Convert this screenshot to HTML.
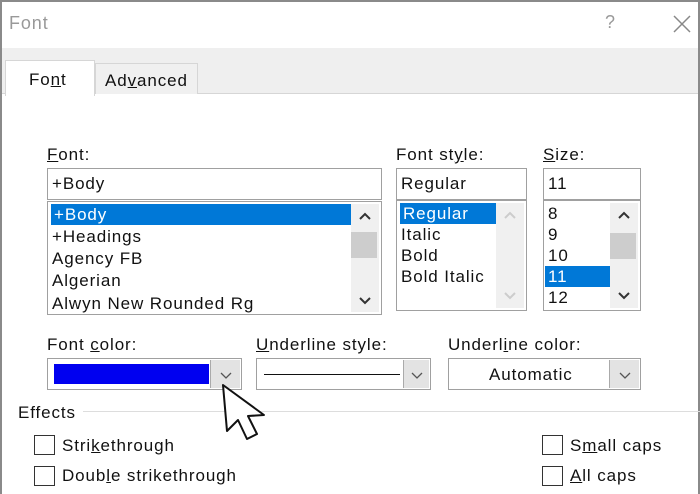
<!DOCTYPE html>
<html><head><style>
*{box-sizing:border-box;margin:0;padding:0}
body{width:700px;height:494px;background:#fff;font-family:"Liberation Sans",sans-serif;font-size:17px;letter-spacing:0.9px;color:#111;position:relative;overflow:hidden}
.a{position:absolute;white-space:nowrap}
.frame{left:0;top:0;width:700px;height:494px;border:2px solid #8a8a8a;border-bottom:none}
.box{position:absolute;border:1px solid #a0a0a0;background:#fff}
.row{position:absolute;left:4px;height:21px;line-height:21px;white-space:nowrap}
.sel{background:#0078d7;color:#fff}
.sb{position:absolute;top:2px;bottom:2px;right:2px;width:28px;background:#f0f0f0}
.cb{position:absolute;width:21px;height:20px;border:1px solid #333;background:#fff}
u{text-decoration:underline}
.dd{position:absolute;top:1px;right:1px;bottom:1px;width:30px;background:#e3e3e3;border-left:1px solid #aaa}
svg.ch{position:absolute}
</style></head><body>
<div class="a frame"></div>
<div class="a" style="left:9px;top:13px;font-size:18px;color:#999">Font</div>
<div class="a" style="left:605px;top:12px;font-size:18px;color:#999">?</div>
<svg class="a" style="left:672px;top:14px" width="20" height="20"><path d="M2 2L18 18M18 2L2 18" stroke="#888" stroke-width="1.5"/></svg>
<div class="a" style="left:2px;top:48px;width:696px;height:46px;background:#efefef;border-bottom:1px solid #d6d6d6"></div>
<div class="a" style="left:5px;top:60px;width:90px;height:36px;background:#fff;border:1px solid #d6d6d6;border-bottom:none"></div>
<div class="a" style="left:29px;top:70px">Fo<u>n</u>t</div>
<div class="a" style="left:95px;top:63px;width:103px;height:31px;background:#f0f0f0;border:1px solid #d6d6d6;border-bottom:none"></div>
<div class="a" style="left:105px;top:71px">Ad<u>v</u>anced</div>

<div class="a" style="left:47px;top:145px"><u>F</u>ont:</div>
<div class="box" style="left:47px;top:168px;width:335px;height:32px"><span class="row" style="top:4px">+Body</span></div>
<div class="box" style="left:47px;top:201px;width:335px;height:114px">
<div class="row sel" style="top:2px;width:300px;left:3px;padding-left:3px">+Body</div>
<div class="row" style="top:24px">+Headings</div>
<div class="row" style="top:46px">Agency FB</div>
<div class="row" style="top:68px">Algerian</div>
<div class="row" style="top:91px">Alwyn New Rounded Rg</div>
<div class="sb"><div class="a" style="left:0;top:28px;width:26px;height:26px;background:#cdcdcd"></div>
<svg class="ch" style="left:7px;top:8px" width="14" height="10"><path d="M2 7L7 2L12 7" stroke="#333" stroke-width="2" fill="none"/></svg>
<svg class="ch" style="left:7px;top:92px" width="14" height="10"><path d="M2 2L7 7L12 2" stroke="#333" stroke-width="2" fill="none"/></svg></div>
</div>

<div class="a" style="left:396px;top:145px">Font st<u>y</u>le:</div>
<div class="box" style="left:396px;top:168px;width:131px;height:32px"><span class="row" style="top:4px">Regular</span></div>
<div class="box" style="left:396px;top:200px;width:131px;height:111px">
<div class="row sel" style="top:2px;width:97px;left:3px;padding-left:3px">Regular</div>
<div class="row" style="top:23px">Italic</div>
<div class="row" style="top:44px">Bold</div>
<div class="row" style="top:65px">Bold Italic</div>
<div class="sb"><svg class="ch" style="left:7px;top:8px" width="14" height="10"><path d="M2 7L7 2L12 7" stroke="#ccc" stroke-width="2" fill="none"/></svg>
<svg class="ch" style="left:7px;top:88px" width="14" height="10"><path d="M2 2L7 7L12 2" stroke="#ccc" stroke-width="2" fill="none"/></svg></div>
</div>

<div class="a" style="left:543px;top:145px"><u>S</u>ize:</div>
<div class="box" style="left:543px;top:168px;width:98px;height:32px"><span class="row" style="top:4px">11</span></div>
<div class="box" style="left:543px;top:200px;width:98px;height:111px">
<div class="row" style="top:2px">8</div>
<div class="row" style="top:23px">9</div>
<div class="row" style="top:44px">10</div>
<div class="row sel" style="top:65px;width:66px;left:1px;padding-left:3px">11</div>
<div class="row" style="top:86px">12</div>
<div class="sb"><div class="a" style="left:0;top:30px;width:26px;height:26px;background:#cdcdcd"></div>
<svg class="ch" style="left:7px;top:8px" width="14" height="10"><path d="M2 7L7 2L12 7" stroke="#333" stroke-width="2" fill="none"/></svg>
<svg class="ch" style="left:7px;top:88px" width="14" height="10"><path d="M2 2L7 7L12 2" stroke="#333" stroke-width="2" fill="none"/></svg></div>
</div>

<div class="a" style="left:47px;top:335px">Font <u>c</u>olor:</div>
<div class="box" style="left:47px;top:358px;width:195px;height:32px"><div class="a" style="left:6px;top:5px;width:155px;height:20px;background:#0000f0"></div><div class="dd"><svg class="ch" style="left:8px;top:11px" width="14" height="10"><path d="M2 2L7 7L12 2" stroke="#555" stroke-width="1.3" fill="none"/></svg></div></div>
<div class="a" style="left:256px;top:335px"><u>U</u>nderline style:</div>
<div class="box" style="left:256px;top:358px;width:175px;height:32px"><div class="a" style="left:7px;top:15px;width:136px;height:1px;background:#111"></div><div class="dd" style="width:26px"><svg class="ch" style="left:6px;top:11px" width="14" height="10"><path d="M2 2L7 7L12 2" stroke="#555" stroke-width="1.3" fill="none"/></svg></div></div>
<div class="a" style="left:448px;top:335px">Underl<u>i</u>ne color:</div>
<div class="box" style="left:448px;top:358px;width:193px;height:32px"><div class="a" style="left:40px;top:6px">Automatic</div><div class="dd"><svg class="ch" style="left:8px;top:11px" width="14" height="10"><path d="M2 2L7 7L12 2" stroke="#555" stroke-width="1.3" fill="none"/></svg></div></div>

<div class="a" style="left:18px;top:403px">Effects</div>
<div class="a" style="left:83px;top:411px;width:617px;height:1px;background:#ddd"></div>
<div class="cb" style="left:34px;top:435px"></div><div class="a" style="left:62px;top:436px">Stri<u>k</u>ethrough</div>
<div class="cb" style="left:34px;top:466px"></div><div class="a" style="left:62px;top:466px">Doub<u>l</u>e strikethrough</div>
<div class="cb" style="left:542px;top:435px"></div><div class="a" style="left:570px;top:436px">S<u>m</u>all caps</div>
<div class="cb" style="left:542px;top:466px"></div><div class="a" style="left:570px;top:466px"><u>A</u>ll caps</div>

<svg class="a" style="left:218px;top:383px" width="60" height="64"><path d="M5 2L9 48L20 37L29 56L39 51L30 33L46 32Z" fill="#fff" stroke="#111" stroke-width="2" stroke-linejoin="round"/></svg>
</body></html>
